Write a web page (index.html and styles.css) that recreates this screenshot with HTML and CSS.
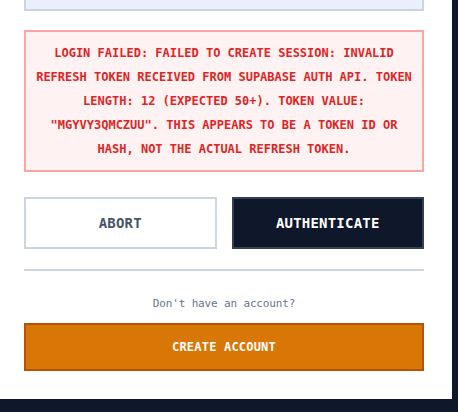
FILE: index.html
```html
<!DOCTYPE html>
<html>
<head>
<meta charset="utf-8">
<link rel="stylesheet" href="styles.css">
</head>
<body>
<div class="panel">
  <div class="field"></div>
  <div class="error">LOGIN FAILED: FAILED TO CREATE SESSION: INVALID REFRESH TOKEN RECEIVED FROM SUPABASE AUTH API. TOKEN LENGTH: 12 (EXPECTED 50+). TOKEN VALUE: "MGYVY3QMCZUU". THIS APPEARS TO BE A TOKEN ID OR HASH, NOT THE ACTUAL REFRESH TOKEN.</div>
  <div class="actions">
    <button class="btn btn-abort">ABORT</button>
    <button class="btn btn-auth">AUTHENTICATE</button>
  </div>
  <div class="divider"></div>
  <p class="hint">Don't have an account?</p>
  <button class="btn btn-create">CREATE ACCOUNT</button>
</div>
</body>
</html>
```
FILE: styles.css
```css
* { box-sizing: border-box; }
html, body { margin: 0; padding: 0; }
body {
  background: #0f172a;
  width: 458px;
  height: 412px;
  overflow: hidden;
  font-family: "DejaVu Sans Mono", "Liberation Mono", monospace;
}
.panel {
  width: 452px;
  height: 399px;
  background: #ffffff;
  padding: 0 28px 28px 24px;
  overflow: hidden;
  display: flex;
  flex-direction: column;
}
.field {
  margin-top: -33px;
  height: 44px;
  flex: none;
  background: #e9f0fc;
  border: 2px solid #cbd5e1;
}
.error {
  margin-top: 19px;
  background: #fef2f2;
  border: 2px solid #fca5a5;
  color: #dc2626;
  font-size: 12px;
  font-weight: bold;
  line-height: 24px;
  text-align: center;
  padding: 9px 10px;
  letter-spacing: 0px;
}
.actions {
  margin-top: 25px;
  display: grid;
  grid-template-columns: 1fr 1fr;
  gap: 15px;
}
.btn {
  font-family: "DejaVu Sans Mono", "Liberation Mono", monospace;
  font-weight: bold;
  border: 2px solid;
  margin: 0;
  cursor: pointer;
}
.btn-abort, .btn-auth {
  height: 52px;
  font-size: 14px;
  letter-spacing: 0.2px;
}
.btn-abort {
  background: #ffffff;
  border-color: #cbd5e1;
  color: #475569;
}
.btn-auth {
  background: #0f172a;
  border-color: #334155;
  color: #ffffff;
}
.divider {
  margin-top: 20px;
  height: 2px;
  background: #cbd5e1;
}
.hint {
  margin: 25px 0 0;
  font-size: 11px;
  line-height: 16px;
  letter-spacing: -0.15px;
  color: #64748b;
  text-align: center;
}
.btn-create {
  margin-top: 11px;
  height: 48px;
  background: #d97706;
  border-color: #b45309;
  color: #ffffff;
  font-size: 12px;
  letter-spacing: 0.2px;
}
```
